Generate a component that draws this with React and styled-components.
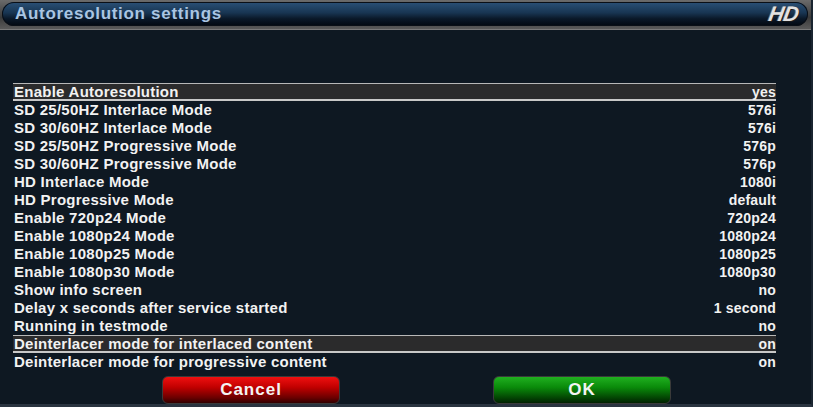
import React from "react";
import styled, { createGlobalStyle } from "styled-components";

const GlobalStyle = createGlobalStyle`
  body {
    margin: 0;
    background: #0e1822;
  }
`;

const settings = [
  { label: "Enable Autoresolution", value: "yes", selected: true },
  { label: "SD 25/50HZ Interlace Mode", value: "576i" },
  { label: "SD 30/60HZ Interlace Mode", value: "576i" },
  { label: "SD 25/50HZ Progressive Mode", value: "576p" },
  { label: "SD 30/60HZ Progressive Mode", value: "576p" },
  { label: "HD Interlace Mode", value: "1080i" },
  { label: "HD Progressive Mode", value: "default" },
  { label: "Enable 720p24 Mode", value: "720p24" },
  { label: "Enable 1080p24 Mode", value: "1080p24" },
  { label: "Enable 1080p25 Mode", value: "1080p25" },
  { label: "Enable 1080p30 Mode", value: "1080p30" },
  { label: "Show info screen", value: "no" },
  { label: "Delay x seconds after service started", value: "1 second" },
  { label: "Running in testmode", value: "no" },
  { label: "Deinterlacer mode for interlaced content", value: "on", selected: true },
  { label: "Deinterlacer mode for progressive content", value: "on" },
];

export default function App() {
  return (
    <Window>
      <GlobalStyle />
      <TitleFrame>
        <TitleBar>
          <Title>Autoresolution settings</Title>
          <HdBadge>HD</HdBadge>
        </TitleBar>
      </TitleFrame>
      <Body>
        <List>
          {settings.map((s) => (
            <Row key={s.label} $selected={s.selected}>
              <span>{s.label}</span>
              <Value>{s.value}</Value>
            </Row>
          ))}
        </List>
        <Buttons>
          <Button $color="red">Cancel</Button>
          <Button $color="green">OK</Button>
        </Buttons>
      </Body>
    </Window>
  );
}

const Window = styled.div`
  width: 813px;
  height: 407px;
  display: flex;
  flex-direction: column;
  background: #0e1822;
  border-right: 2px solid #1a2530;
  border-bottom: 3px solid #2a3440;
  box-sizing: border-box;
  overflow: hidden;
  font-family: "Liberation Sans", Arial, sans-serif;
`;

const TitleFrame = styled.div`
  height: 30px;
  box-sizing: border-box;
  padding: 2px 3px 3px 2px;
  background: linear-gradient(#6b6b6b, #3a3a3a 60%, #5a5a5a);
  border-bottom: 1px solid #7a7a7a;
`;

const TitleBar = styled.div`
  height: 100%;
  display: flex;
  align-items: center;
  justify-content: space-between;
  padding: 0 10px 0 13px;
  border-radius: 13px;
  background: linear-gradient(#2b5177 0%, #183552 45%, #0a1828 70%, #020810 100%);
  box-shadow: inset 0 0 0 1px #0a0f16;
`;

const Title = styled.div`
  color: #a9c5e2;
  font-size: 17px;
  font-weight: bold;
  letter-spacing: 0.7px;
`;

const HdBadge = styled.div`
  font-size: 21px;
  font-weight: 900;
  font-style: italic;
  color: #e2e2e2;
  letter-spacing: -0.5px;
  transform: skewX(-10deg);
  text-shadow: 1px 1px 0 #1a1a1a, -1px 0 0 #666;
`;

const Body = styled.div`
  flex: 1;
  display: flex;
  flex-direction: column;
  padding: 53px 35px 0 13px;
`;

const List = styled.div`
  display: flex;
  flex-direction: column;
`;

const Row = styled.div`
  height: 18px;
  box-sizing: border-box;
  display: flex;
  justify-content: space-between;
  align-items: center;
  padding: 0 0 0 1px;
  color: #f2f2f2;
  font-size: 15px;
  font-weight: bold;
  letter-spacing: 0.25px;
  background: ${(p) => (p.$selected ? "#2b2b2c" : "transparent")};
  border-top: 1px solid ${(p) => (p.$selected ? "#b8b8b8" : "transparent")};
  border-bottom: 2px solid ${(p) => (p.$selected ? "#c8c8c8" : "transparent")};
`;

const Value = styled.span`
  font-size: 14px;
  letter-spacing: 0.2px;
`;

const Buttons = styled.div`
  display: flex;
  gap: 153px;
  margin-top: 5px;
  padding-left: 149px;
`;

const Button = styled.div`
  width: 178px;
  height: 28px;
  box-sizing: border-box;
  display: flex;
  align-items: center;
  justify-content: center;
  border-radius: 6px;
  color: #f4f4f4;
  font-size: 17px;
  font-weight: bold;
  letter-spacing: 1px;
  border: 1px solid #3a3a3a;
  background: ${(p) =>
    p.$color === "red"
      ? "linear-gradient(#f01010 0%, #c00000 40%, #6a0000 80%, #300000 100%)"
      : "linear-gradient(#20b020 0%, #0a8a0a 40%, #034503 80%, #012001 100%)"};
`;
